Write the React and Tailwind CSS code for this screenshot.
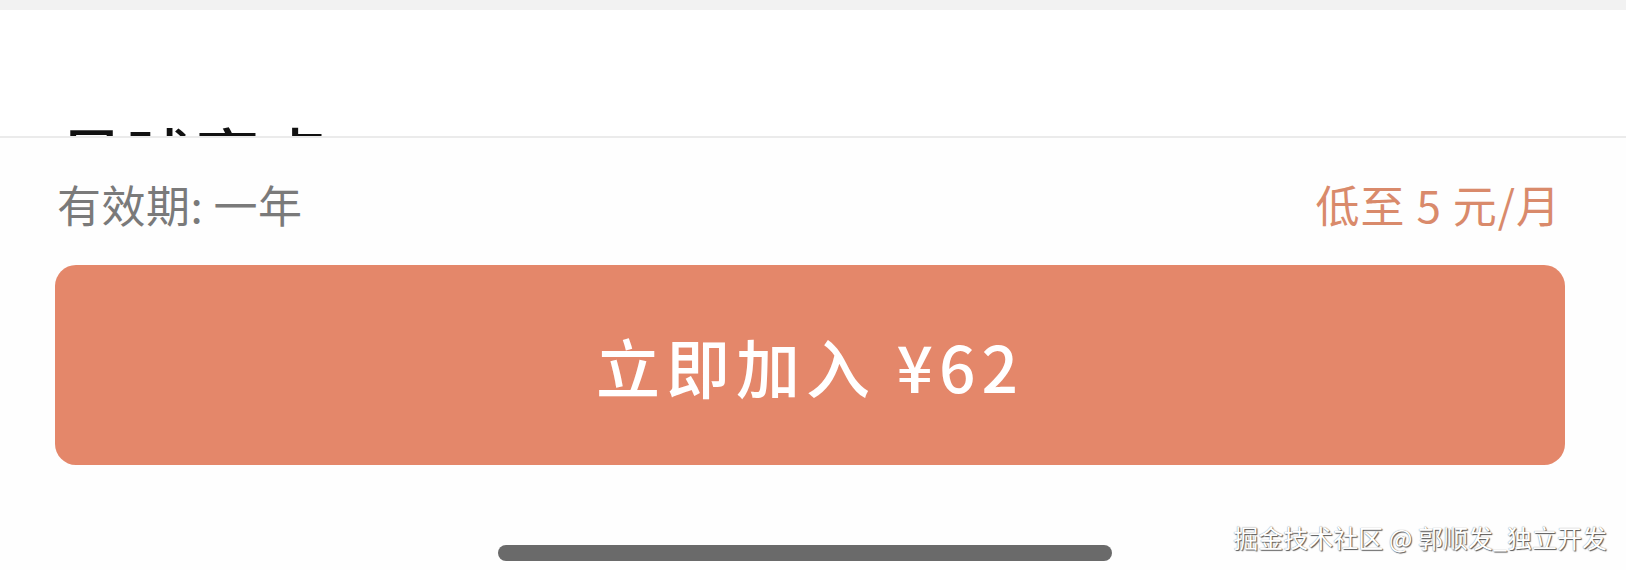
import React from 'react';

const font = { fontFamily: '"Noto Sans CJK SC", "Noto Sans", sans-serif' };

const App = () => (
  <div className="relative w-[1626px] h-[570px] overflow-hidden bg-white" style={font}>
    <div className="h-[10px] bg-[#f2f2f2]" />

    <div className="h-[126px] overflow-hidden">
      <h1 className="mt-[112px] ml-[60px] text-[63px] leading-[63px] font-medium text-[#111] tracking-[5px]">
        星球亮点
      </h1>
    </div>

    <div className="border-t-2 border-[#ebebeb] bg-[#fefefe] h-[434px]">
      <div className="ml-[55px] w-[1510px] flex flex-col">
        <div className="flex items-center justify-between h-[127px] pt-[5px] pl-[2px] pr-[4px] text-[44px] leading-none">
          <span className="text-[#7a7a7a] tracking-[0.5px]">有效期: 一年</span>
          <span className="text-[#d98a6b] tracking-[1px]">低至 5 元/月</span>
        </div>

        <button className="h-[200px] w-full rounded-[21px] bg-[#e4876a] text-white text-[64px] font-medium tracking-[6px] flex items-center justify-center">
          立即加入 ¥62
        </button>
      </div>

      <div className="mt-[80px] ml-[498px] w-[614px] h-[16px] rounded-full bg-[#6a6a6a]" />
    </div>

    <div className="absolute right-[19px] top-[525px] text-[25px] leading-none text-white [text-shadow:1px_1px_1px_#555,0_0_1px_#777]">
      掘金技术社区 @ 郭顺发_独立开发
    </div>
  </div>
);

export default App;
